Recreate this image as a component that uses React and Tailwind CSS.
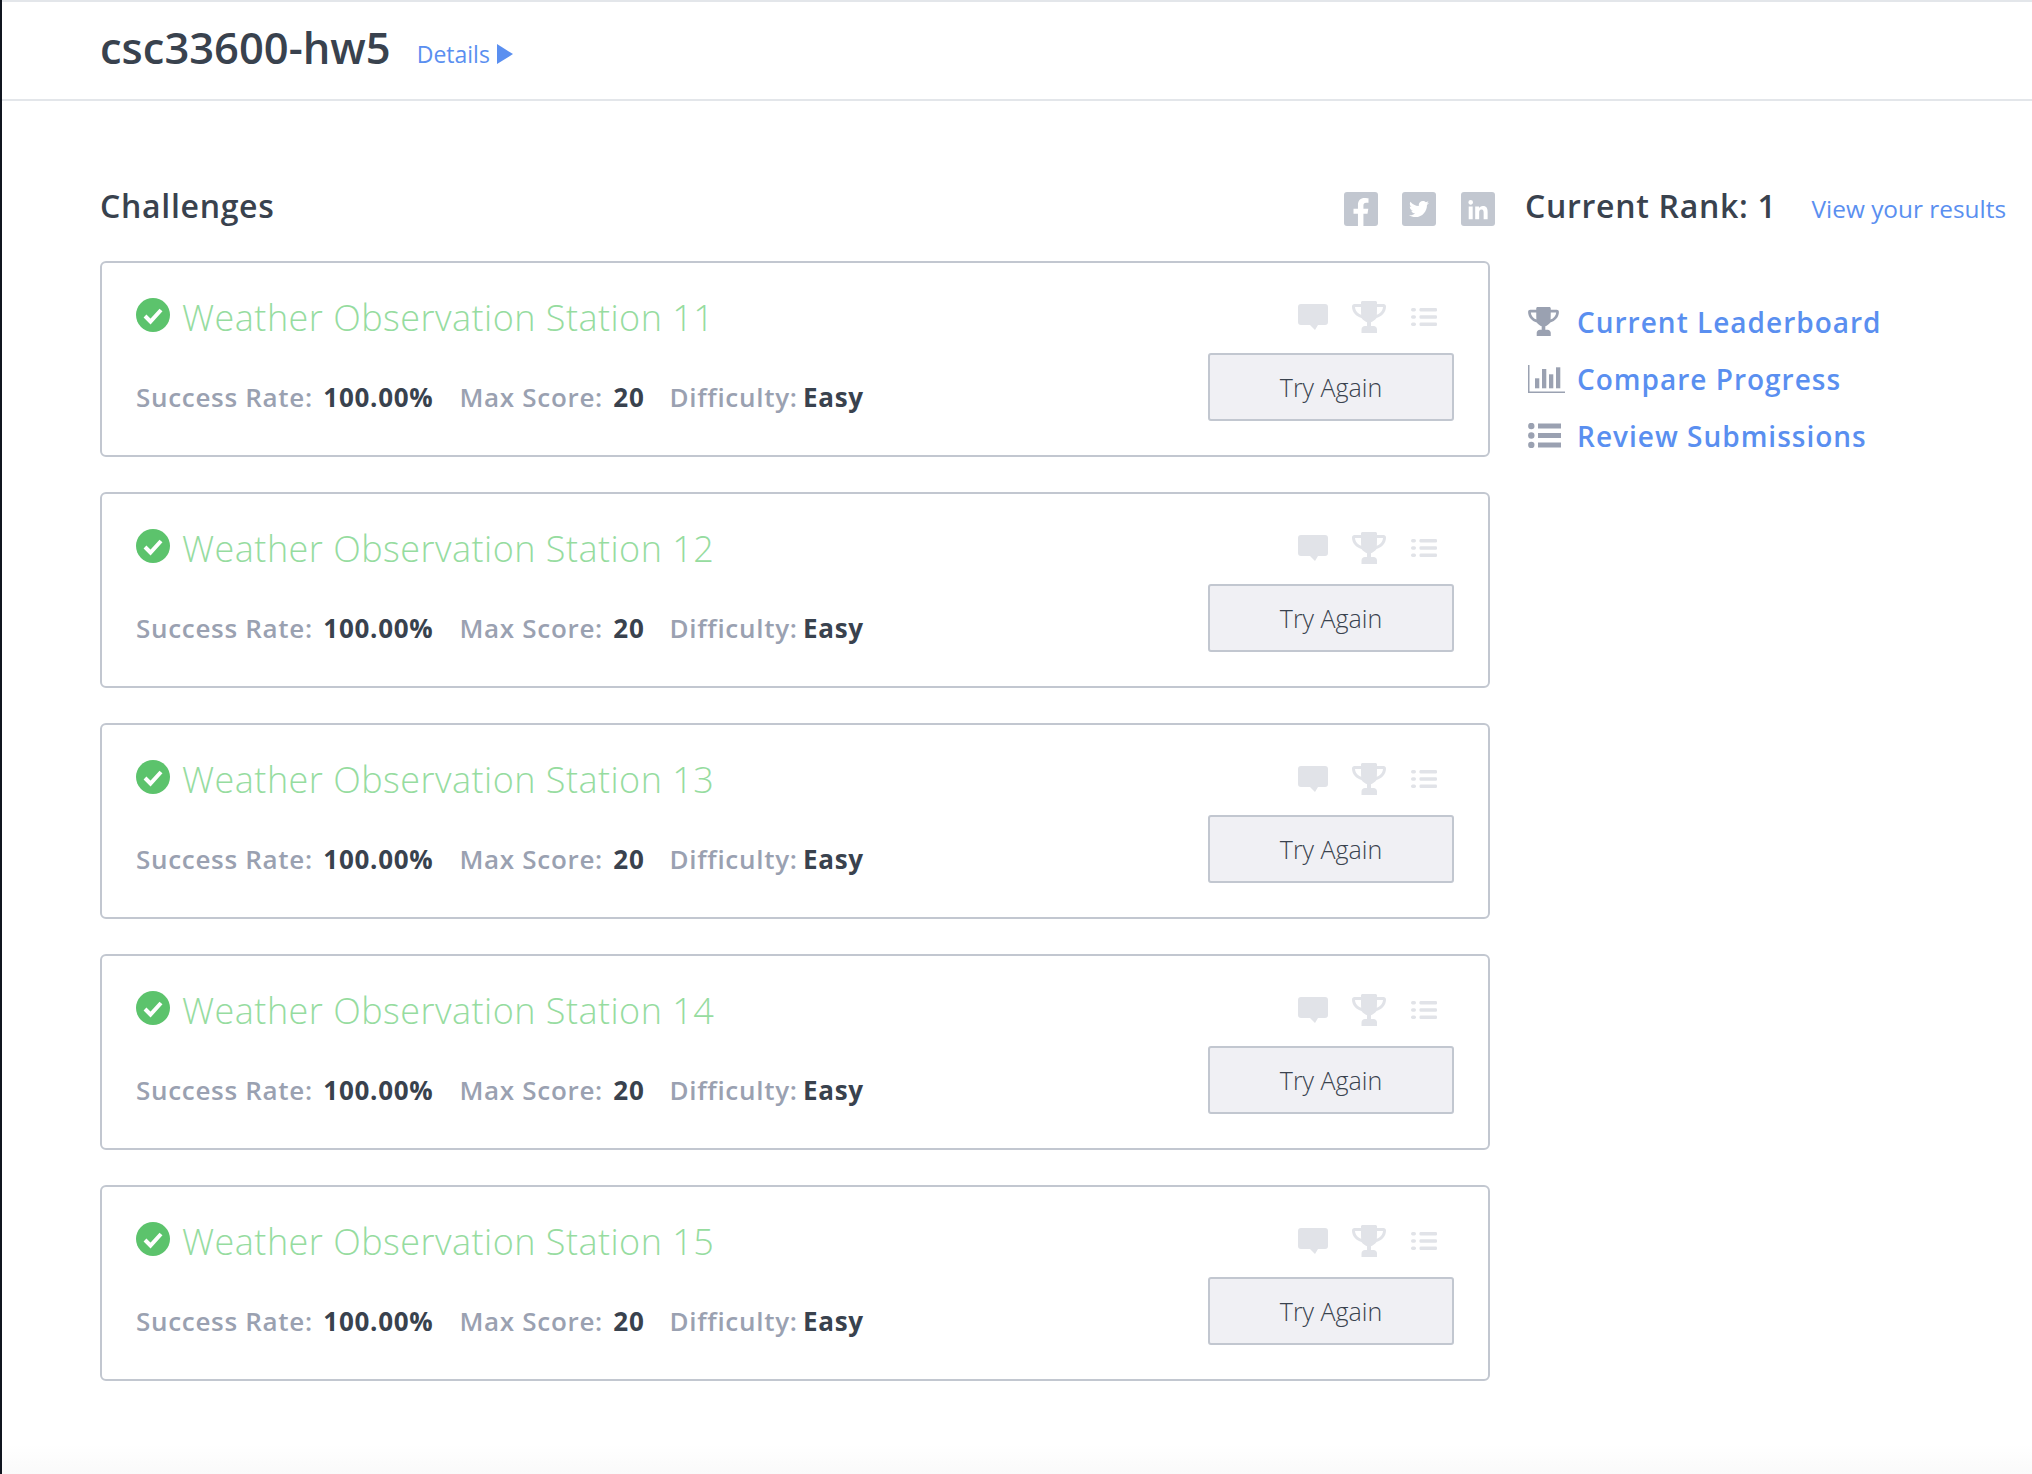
import React from "react";
import { FaFacebookF, FaTwitter, FaLinkedinIn } from "react-icons/fa";

const Trophy = ({ className }) => (
  <svg viewBox="0 0 34 32" className={className} fill="currentColor">
    <path fillRule="evenodd" d="M9 1.5C9 .7 9.7 0 10.5 0h13c.8 0 1.5.7 1.5 1.500V3h6.500C33 3 34 4 34 5.500c0 5.500-4 10-9.500 11.500-1.500 2-3.500 3.500-5.500 4.200V25h2.500c2 0 3.500 1.500 3.500 3.500V32H9.500v-3.500C9.500 26.500 11 25 13 25h2v-3.800c-2-.7-4-2.200-5.500-4.200C4 15.500 0 11 0 5.500 0 4 1 3 2.500 3H9V1.500zM3 6c.2 3.500 2.700 6.500 6.200 7.800C9 11.500 9 8.500 9 6H3zm28 0h-6c0 2.500 0 5.500-.2 7.800C28.300 12.500 30.800 9.500 31 6z" />
  </svg>
);

const Comment = ({ className }) => (
  <svg viewBox="0 0 30 26" className={className} fill="currentColor">
    <path d="M3 0h24a3 3 0 0 1 3 3v15a3 3 0 0 1-3 3h-7l-3 5-5-5H3a3 3 0 0 1-3-3V3a3 3 0 0 1 3-3z" />
  </svg>
);

const ListIcon = ({ className }) => (
  <svg viewBox="0 0 26 18" className={className} fill="currentColor">
    <rect x="0" y="0" width="5" height="3.400" rx="1.700" />
    <rect x="0" y="7.300" width="5" height="3.400" rx="1.700" />
    <rect x="0" y="14.600" width="5" height="3.400" rx="1.700" />
    <rect x="8.500" y="0" width="17.500" height="3.400" rx="1.200" />
    <rect x="8.500" y="7.300" width="17.500" height="3.400" rx="1.200" />
    <rect x="8.500" y="14.600" width="17.500" height="3.400" rx="1.200" />
  </svg>
);

const Bars = ({ className }) => (
  <svg viewBox="0 0 37 28" className={className} fill="currentColor">
    <rect x="0" y="0" width="1.500" height="28" />
    <rect x="0" y="26.500" width="37" height="1.500" />
    <rect x="7" y="13.300" width="4.300" height="10" />
    <rect x="14" y="4" width="4.300" height="19.300" />
    <rect x="21" y="9.300" width="4.300" height="14" />
    <rect x="28" y="2.300" width="4.300" height="21" />
  </svg>
);

const BigList = ({ className }) => (
  <svg viewBox="0 0 33 25" className={className} fill="currentColor">
    <circle cx="3.300" cy="3" r="3.200" />
    <circle cx="3.300" cy="12.500" r="3.200" />
    <circle cx="3.300" cy="22" r="3.200" />
    <rect x="10" y="0.500" width="23" height="5" />
    <rect x="10" y="10" width="23" height="5" />
    <rect x="10" y="19.500" width="23" height="5" />
  </svg>
);

const Check = () => (
  <svg viewBox="0 0 34 34" className="w-[34px] h-[34px] shrink-0">
    <circle cx="17" cy="17" r="17" fill="#5cc36c" />
    <path d="M9 18l5.500 5.500L25 12" fill="none" stroke="#fff" strokeWidth="4" />
  </svg>
);

const Social = ({ children, className = "" }) => (
  <div className={"w-[34px] h-[34px] rounded-[3px] bg-[#c2c7d0] flex items-end justify-center text-white overflow-hidden " + className}>
    {children}
  </div>
);

function Card({ n }) {
  return (
    <div className="h-[196px] border-2 border-[#c2c7d0] rounded-[6px] pl-[34px] pr-[34px] flex justify-between">
      <div>
        <div className="flex items-center gap-[12px] mt-[24px]">
          <Check />
          <span className="text-[36px] leading-[50px] font-[350] text-[#96dc9f] mt-[6px] tracking-[0.47px]">Weather Observation Station {n}</span>
        </div>
        <div className="flex mt-[36px] text-[26px] leading-[36px] font-[650] text-[#9aa1b1] tracking-[0.7px]">
          <span className="mr-[26px]">Success Rate: <b className="font-bold text-[#39424e] ml-[3px]">100.00%</b></span>
          <span className="mr-[25px]">Max Score: <b className="font-bold text-[#39424e] ml-[3px]">20</b></span>
          <span>Difficulty: <b className="font-bold text-[#39424e] ml-[-2px]">Easy</b></span>
        </div>
      </div>
      <div className="flex flex-col items-end">
        <div className="flex items-center text-[#e1e3e8] mt-[37px] h-[33px] mr-[17px]">
          <Comment className="w-[30px] h-[26px]" />
          <Trophy className="w-[34px] h-[32px] ml-[24px]" />
          <ListIcon className="w-[26px] h-[18px] ml-[25px]" />
        </div>
        <button className="mt-[20px] w-[246px] h-[68px] border-2 border-[#c2c7d0] rounded-[3px] bg-[#f0f0f4] text-[25px] font-[350] text-[#39424e] pt-[1px]">
          Try Again
        </button>
      </div>
    </div>
  );
}

export default function App() {
  return (
    <div className="w-[2032px] h-[1474px] overflow-hidden flex bg-white text-[#39424e]" style={{ fontFamily: '"Open Sans", sans-serif' }}>
      <div className="w-[2px] shrink-0 bg-[#10151f]" />
      <div className="flex-1 min-w-0 bg-gradient-to-b from-white from-[98%] to-[#fafafa]">
        <div className="h-[101px] border-t-2 border-b-2 border-[#e3e6ea] pl-[98px] flex items-center">
          <h1 className="text-[43.5px] font-semibold leading-[56px] mb-[5px]">csc33600-hw5</h1>
          <a className="ml-[26px] text-[23px] text-[#5a8ff0] flex items-center mt-[7px]">
            Details
            <svg viewBox="0 0 16 20" className="w-[16px] h-[20px] ml-[7px]" fill="#5a8ff0"><path d="M0 0l16 10L0 20z" /></svg>
          </a>
        </div>
        <div className="pl-[98px] flex">
          <div className="w-[1390px] shrink-0">
            <div className="h-[160px] flex items-start justify-between">
              <h2 className="text-[32px] font-semibold leading-[42px] mt-[84px] tracking-[0.7px]">Challenges</h2>
              <div className="flex mt-[91px] gap-[24px] mr-[-5px]">
                <Social><FaFacebookF className="w-[26px] h-[28px]" /></Social>
                <Social className="!items-center"><FaTwitter className="w-[20px] h-[20px]" /></Social>
                <Social className="ml-[1px] !items-end pb-[4px]"><FaLinkedinIn className="w-[22px] h-[22px]" /></Social>
              </div>
            </div>
            <div className="flex flex-col gap-[35px]">
              {[11, 12, 13, 14, 15].map((n) => (
                <Card key={n} n={n} />
              ))}
            </div>
          </div>
          <div className="ml-[35px] flex-1">
            <div className="flex items-baseline mt-[84px]">
              <span className="text-[32px] font-semibold leading-[42px] whitespace-nowrap tracking-[0.7px]">Current Rank: 1</span>
              <a className="ml-[35px] text-[24.4px] text-[#5a8ff0] whitespace-nowrap">View your results</a>
            </div>
            <div className="mt-[74px] flex flex-col gap-[17px] text-[#5a8ff0] text-[28px] font-[650] leading-[40px] tracking-[1px]">
              <div className="flex items-center">
                <div className="w-[52px] text-[#9aa1b1]"><Trophy className="w-[31px] h-[29px] ml-[3px]" /></div>
                Current Leaderboard
              </div>
              <div className="flex items-center">
                <div className="w-[52px] text-[#9aa1b1]"><Bars className="w-[37px] h-[28px] ml-[3px]" /></div>
                Compare Progress
              </div>
              <div className="flex items-center">
                <div className="w-[52px] text-[#9aa1b1]"><BigList className="w-[33px] h-[25px] ml-[3px]" /></div>
                Review Submissions
              </div>
            </div>
          </div>
        </div>
      </div>
    </div>
  );
}
